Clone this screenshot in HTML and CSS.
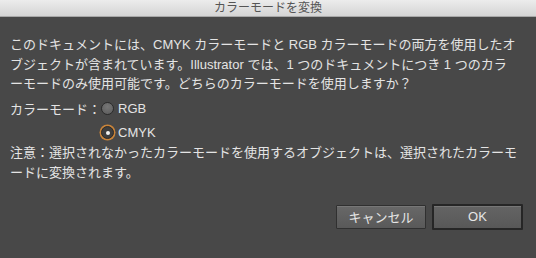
FILE: index.html
```html
<!DOCTYPE html>
<html>
<head>
  <meta charset="utf-8">
  <link rel="stylesheet" href="styles.css">
</head>
<body>
  <div class="dialog">
    <div class="title-bar">カラーモードを変換</div>

    <div class="content">
      <p class="message">このドキュメントには、CMYK カラーモードと RGB カラーモードの両方を使用したオ<br>ブジェクトが含まれています。Illustrator では、1 つのドキュメントにつき 1 つのカラ<br>ーモードのみ使用可能です。どちらのカラーモードを使用しますか？</p>

      <div class="mode-group">
        <span class="mode-label">カラーモード：</span>
        <label class="radio-item">
          <span class="radio"></span>RGB
        </label>
        <span></span>
        <label class="radio-item">
          <span class="radio checked"></span>CMYK
        </label>
      </div>

      <p class="note">注意：選択されなかったカラーモードを使用するオブジェクトは、選択されたカラーモ<br>ードに変換されます。</p>
    </div>

    <div class="actions">
      <button class="btn">キャンセル</button>
      <button class="btn default">OK</button>
    </div>
  </div>
</body>
</html>
```

FILE: styles.css
```css
body {
  margin: 0;
  background: #484848;
  font-family: 'Liberation Sans', 'Noto Sans CJK JP', sans-serif;
  color: #e4e4e4;
}

.dialog {
  width: 536px;
  height: 258px;
  display: flex;
  flex-direction: column;
}

.title-bar {
  height: 16px;
  line-height: 16px;
  text-align: center;
  font-size: 12px;
  color: #555;
  background: linear-gradient(to bottom, #ececec, #d4d4d4);
  border-bottom: 1px solid #a8a8a8;
}

.content {
  padding: 18px 10px 0 10px;
}

.message {
  margin: 0;
  font-size: 13px;
  line-height: 19.5px;
  white-space: nowrap;
}

.mode-group {
  display: grid;
  grid-template-columns: 91px auto;
  grid-auto-rows: 24px;
  align-items: center;
  margin-top: 3px;
  font-size: 13px;
}

.mode-label {
  white-space: nowrap;
}

.radio-item {
  display: flex;
  align-items: center;
  gap: 4px;
}

.radio {
  width: 11px;
  height: 11px;
  border-radius: 50%;
  border: 1px solid #2a2a2a;
  background: radial-gradient(circle at 50% 35%, #777, #5a5a5a);
}

.radio.checked {
  position: relative;
  background: #3e3e3e;
  box-shadow: 0 0 0 1.5px #c9843a;
}

.radio.checked::after {
  content: '';
  position: absolute;
  left: 3.5px;
  top: 3.5px;
  width: 4px;
  height: 4px;
  border-radius: 50%;
  background: #f2f2f2;
}

.note {
  margin: 0;
  margin-top: -2px;
  font-size: 13px;
  line-height: 20px;
  white-space: nowrap;
}

.actions {
  display: flex;
  justify-content: flex-end;
  align-items: center;
  gap: 6px;
  padding: 0 13px 0 0;
  margin-top: 21px;
}

.btn {
  width: 90px;
  height: 24px;
  padding: 0;
  font-family: 'Liberation Sans', 'Noto Sans CJK JP', sans-serif;
  font-size: 13px;
  color: #e6e6e6;
  border: 1px solid #303030;
  border-radius: 1px;
  background: linear-gradient(to bottom, #686868, #595959);
  box-shadow: inset 0 1px 0 #777;
}

.btn.default {
  width: 91px;
  height: 26px;
  border: 2px solid #262626;
  background: linear-gradient(to bottom, #646464, #585858);
}
```
